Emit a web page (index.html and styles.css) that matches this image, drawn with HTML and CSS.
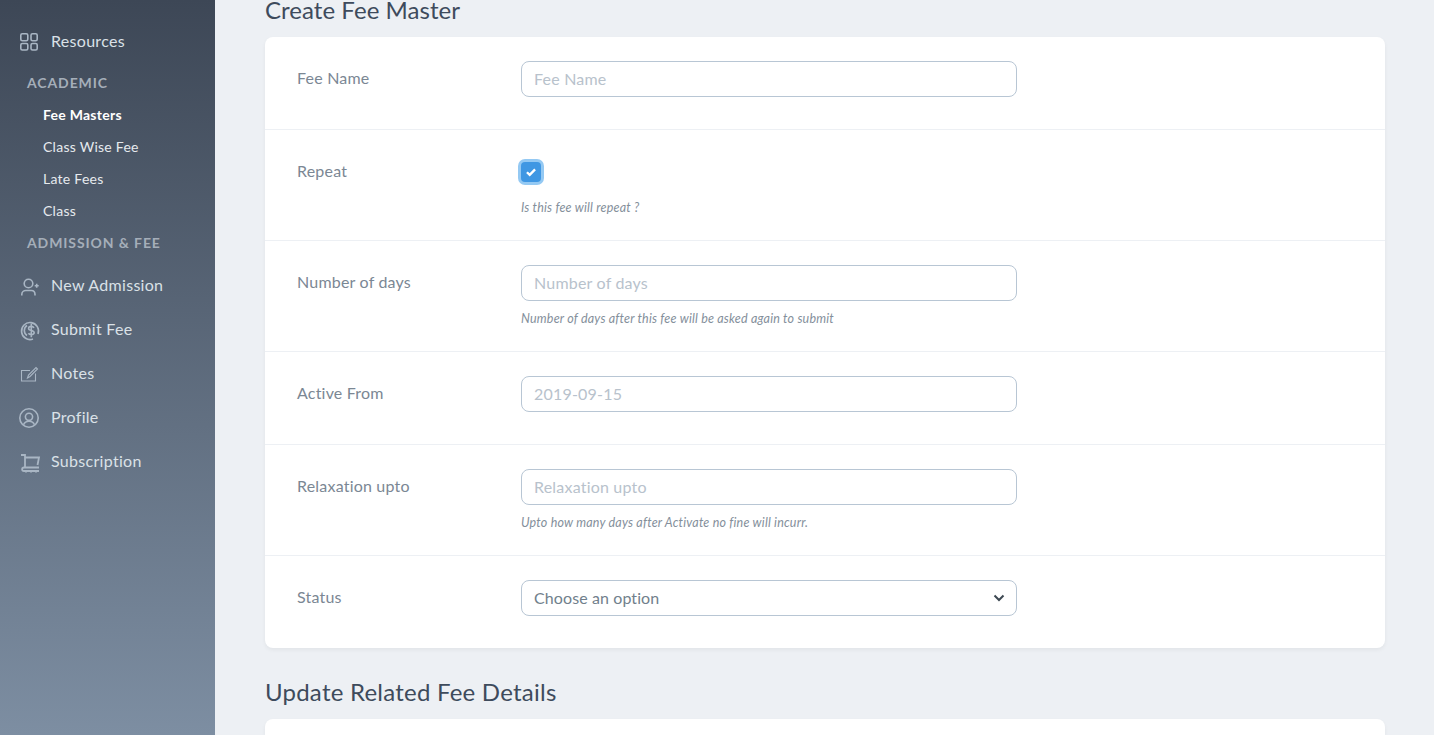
FILE: index.html
```html
<!DOCTYPE html>
<html lang="en">

<head>
  <meta charset="UTF-8" />
  <meta name="viewport" content="width=device-width, initial-scale=1.0" />
  <title>Create Fee Master</title>
  <link rel="stylesheet" href="styles.css">
</head>

<body>
  <aside class="sidebar">
    <a class="nav-item">
      <svg class="nav-icon" viewBox="0 0 20 20"><rect x="1.800" y="2.800" width="7" height="7" rx="1.500" /><rect x="12" y="2.800" width="6.200" height="7" rx="1.500" /><rect x="1.800" y="12.500" width="7" height="6.500" rx="1.500" /><rect x="12" y="12.500" width="6.200" height="6.500" rx="1.500" /></svg>
      Resources
    </a>
    <div class="nav-title nav-title-first">Academic</div>
    <a class="nav-link active">Fee Masters</a>
    <a class="nav-link">Class Wise Fee</a>
    <a class="nav-link">Late Fees</a>
    <a class="nav-link">Class</a>
    <div class="nav-title nav-title-last">Admission &amp; Fee</div>
    <a class="nav-item">
      <svg class="nav-icon" viewBox="0 0 20 20"><circle cx="9.500" cy="8.500" r="4.300" /><path d="M2.800 20.500v-1c0-2.500 2-4 4-4h5.500c2 0 3.700 1.500 3.700 4v1" /><path d="M17.700 8.700v4M15.700 10.700h4" /></svg>
      New Admission
    </a>
    <a class="nav-item">
      <svg class="nav-icon" viewBox="0 0 20 20"><path d="M14 20A8.500 8.500 0 1 1 19 15" /><path d="M8 16.500A6 6 0 0 1 8 6.500" /><path d="M15 8.800c-.6-1-1.600-1.400-2.700-1.400-1.500 0-2.700.8-2.700 2 0 2.700 5.600 1.500 5.600 4.200 0 1.200-1.300 2-2.900 2-1.200 0-2.300-.5-2.900-1.400M12.300 4.800v13.500" /></svg>
      Submit Fee
    </a>
    <a class="nav-item">
      <svg class="nav-icon nav-icon-thin" viewBox="0 0 20 20"><path d="M11 7.500H2.500v10.500h14v-7.500" /><path d="M8.500 15l1-3 7.500-7.500 1.500 1.500-7.500 7.500z" /></svg>
      Notes
    </a>
    <a class="nav-item">
      <svg class="nav-icon" viewBox="0 0 20 20"><circle cx="10" cy="11" r="9.200" /><circle cx="10" cy="9.800" r="3.600" /><path d="M4.500 17.800c1-2.500 3-3.500 5.500-3.500s4.500 1 5.500 3.500" /></svg>
      Profile
    </a>
    <a class="nav-item">
      <svg class="nav-icon nav-icon-cart" viewBox="0 0 20 20"><path d="M2 4h4v12" /><path d="M6 6.500h14l-1.500 7.500" /><path d="M20 16.500H5c-2.500 0-2.500 3.500 0 3.500h15" /><path d="M7 20v1.500M12 20v1.500M17 20v1.500" /></svg>
      Subscription
    </a>
  </aside>

  <main class="content">
    <h2 class="page-title page-title-top">Create Fee Master</h2>
    <section class="card">
      <div class="form-row">
        <label class="form-label" for="fee-name">Fee Name</label>
        <div class="form-field">
          <input class="form-input" type="text" id="fee-name" placeholder="Fee Name" />
        </div>
      </div>
      <div class="form-row form-row-help">
        <label class="form-label">Repeat</label>
        <div class="form-field">
          <div class="check-wrap">
            <span class="check-box">
              <svg viewBox="0 0 12 12"><path d="M2.500 6.200l2.400 2.300 4.600-4.700" /></svg>
            </span>
          </div>
          <p class="help-text">Is this fee will repeat ?</p>
        </div>
      </div>
      <div class="form-row form-row-help">
        <label class="form-label" for="days">Number of days</label>
        <div class="form-field">
          <input class="form-input" type="text" id="days" placeholder="Number of days" />
          <p class="help-text">Number of days after this fee will be asked again to submit</p>
        </div>
      </div>
      <div class="form-row">
        <label class="form-label" for="active-from">Active From</label>
        <div class="form-field">
          <input class="form-input" type="text" id="active-from" placeholder="2019-09-15" />
        </div>
      </div>
      <div class="form-row form-row-help">
        <label class="form-label" for="relaxation">Relaxation upto</label>
        <div class="form-field">
          <input class="form-input" type="text" id="relaxation" placeholder="Relaxation upto" />
          <p class="help-text">Upto how many days after Activate no fine will incurr.</p>
        </div>
      </div>
      <div class="form-row">
        <label class="form-label">Status</label>
        <div class="form-field">
          <div class="form-input form-select">
            Choose an option
            <svg class="select-arrow" viewBox="0 0 12 8"><path d="M1.500 1.500L6 6l4.500-4.500" /></svg>
          </div>
        </div>
      </div>
    </section>

    <h2 class="page-title">Update Related Fee Details</h2>
    <section class="card card-next"></section>
  </main>
</body>

</html>
```

FILE: styles.css
```css
* {
  box-sizing: border-box;
}

body {
  font-family: "Lato", "Open Sans", sans-serif;
  background-color: #edf0f4;
  margin: 0;
  height: 735px;
  overflow: hidden;
  display: flex;
  color: #3d4852;
}

.sidebar {
  width: 215px;
  height: 735px;
  flex-shrink: 0;
  padding-top: 19px;
  background: linear-gradient(180deg, #3d4756 0%, #7d8ea2 100%);
}

.nav-item {
  display: flex;
  align-items: center;
  height: 44px;
  padding: 0 0 2px 19px;
  gap: 12px;
  font-size: 16px;
  letter-spacing: 0.3px;
  color: #dae1e7;
}

.nav-icon {
  width: 20px;
  height: 20px;
  margin-top: 2px;
  overflow: visible;
  fill: none;
  stroke: #a9b6c4;
  stroke-width: 1.6;
}

.nav-icon-thin {
  stroke-width: 1.1;
}

.nav-icon-cart {
  stroke-width: 1.8;
}

.nav-title {
  height: 32px;
  line-height: 32px;
  padding-left: 27px;
  font-size: 14px;
  font-weight: 700;
  letter-spacing: 0.9px;
  text-transform: uppercase;
  color: #a5aeb9;
}

.nav-title-first {
  margin-top: 4px;
}

.nav-title-last {
  margin-bottom: 4px;
}

.nav-link {
  display: block;
  height: 32px;
  line-height: 32px;
  padding-left: 43px;
  font-size: 14px;
  letter-spacing: 0.26px;
  color: #e6eaee;
}

.nav-link.active {
  font-weight: 700;
  color: #fff;
}

.content {
  flex: 1;
  padding: 0 49px 0 50px;
}

.page-title {
  margin: 0;
  height: 26px;
  line-height: 26px;
  font-size: 24px;
  font-weight: 400;
  letter-spacing: 0.23px;
  color: #3e4b5c;
}

.page-title-top {
  margin-top: -3px;
  margin-bottom: 14px;
  letter-spacing: 0.05px;
}

.card {
  background-color: #fff;
  border-radius: 8px;
  box-shadow: 0 2px 4px rgba(0, 0, 0, 0.05);
  margin-bottom: 31px;
}

.card-next {
  margin-top: 14px;
  margin-bottom: 0;
  height: 16px;
  border-radius: 8px 8px 0 0;
}

.form-row {
  display: flex;
  height: 93px;
  padding: 24px 32px 0;
  border-bottom: 1px solid #edf0f4;
}

.form-row:last-child {
  height: 92px;
  border-bottom: none;
}

.form-row-help {
  height: 111px;
}

.form-label {
  width: 224px;
  flex-shrink: 0;
  line-height: 34px;
  font-size: 16px;
  letter-spacing: 0.2px;
  color: #7b8794;
}

.form-field {
  width: 496px;
}

.form-input {
  display: block;
  width: 100%;
  height: 36px;
  padding: 0 12px 2px;
  border: 1px solid #b8c6d4;
  border-radius: 8px;
  background: #fff;
  font-family: inherit;
  font-size: 16px;
  letter-spacing: 0.2px;
  color: #717f8c;
}

.form-input::placeholder {
  color: #b8c2cc;
  opacity: 1;
}

.form-select {
  display: flex;
  align-items: center;
  justify-content: space-between;
  letter-spacing: 0.1px;
}

.select-arrow {
  width: 12px;
  height: 8px;
  margin: 2px -1px 0 0;
  fill: none;
  stroke: #3d4852;
  stroke-width: 2;
}

.check-wrap {
  height: 36px;
  padding-top: 8px;
}

.check-box {
  display: flex;
  align-items: center;
  justify-content: center;
  width: 20px;
  height: 20px;
  border-radius: 4px;
  background-color: #3f97e3;
  box-shadow: 0 0 0 3px #94c9f3;
}

.check-box svg {
  width: 14px;
  height: 14px;
  fill: none;
  stroke: #fff;
  stroke-width: 2;
}

.help-text {
  margin: 11px 0 0;
  height: 14px;
  line-height: 14px;
  font-size: 12.500px;
  font-style: italic;
  letter-spacing: 0.2px;
  color: #848f9b;
}
```
